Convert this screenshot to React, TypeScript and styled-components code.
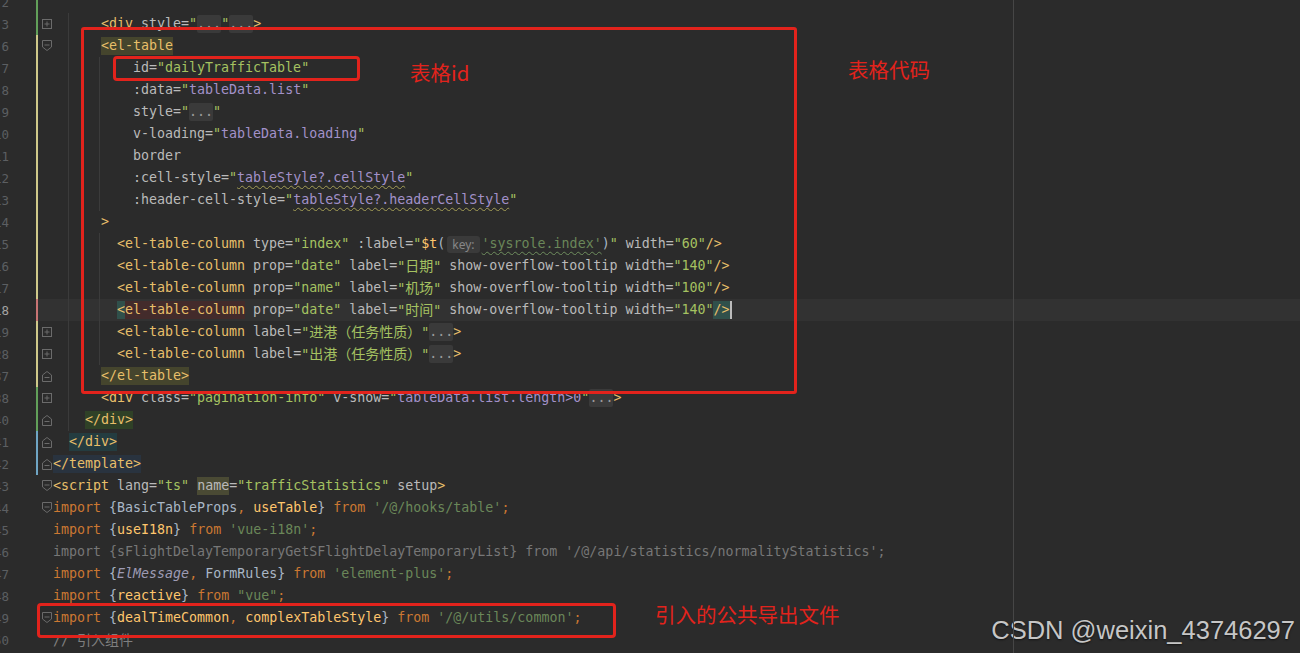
import React from "react";
import styled, { createGlobalStyle, css } from "styled-components";

type Kind =
  | "tag"
  | "attr"
  | "str"
  | "vue"
  | "fold"
  | "plain"
  | "kw"
  | "fn"
  | "js"
  | "dim"
  | "ital"
  | "cmt"
  | "hint"
  | "caret";

type Tok = { t: string; k: Kind; bg?: string; wavy?: string };
type FoldKind = "plus" | "open" | "close";
type Line = {
  n: number;
  indent: number;
  stripe?: string;
  fold?: FoldKind;
  guides?: number[];
  current?: boolean;
  toks: Tok[];
};

const GREEN = "#62a05a";
const YELLOW = "#cfc98a";
const PINK = "#c87474";
const BLUE = "#6fa5c4";

const OLIVE = "#45452d";
const TEAL = "#30504b";
const RED_BG = "#432b2b";

const colors: Record<Kind, string> = {
  tag: "#e8bf6a",
  attr: "#bababa",
  str: "#a5c261",
  vue: "#a291c9",
  fold: "#9a9a9a",
  plain: "#a9b7c6",
  kw: "#cc7832",
  fn: "#ffc66d",
  js: "#6a8759",
  dim: "#777777",
  ital: "#9e9bb4",
  cmt: "#7f7f7f",
  hint: "#8a8a8a",
  caret: "#bbbbbb",
};

const tk = (t: string, k: Kind, extra: Partial<Tok> = {}): Tok => ({ t, k, ...extra });

const lines: Line[] = [
  { n: 2, indent: 0, stripe: GREEN, toks: [] },
  {
    n: 3,
    indent: 3,
    stripe: GREEN,
    fold: "plus",
    guides: [15],
    toks: [tk("<div", "tag"), tk(" style=", "attr"), tk('"', "str"), tk("...", "fold"), tk('"', "str"), tk("...", "fold"), tk(">", "tag")],
  },
  { n: 6, indent: 3, stripe: YELLOW, fold: "open", guides: [15], toks: [tk("<el-table", "tag", { bg: OLIVE })] },
  { n: 7, indent: 5, stripe: YELLOW, guides: [15, 46], toks: [tk("id=", "attr"), tk('"dailyTrafficTable"', "str")] },
  {
    n: 8,
    indent: 5,
    stripe: YELLOW,
    guides: [15, 46],
    toks: [tk(":data=", "attr"), tk('"', "str"), tk("tableData.list", "vue"), tk('"', "str")],
  },
  {
    n: 9,
    indent: 5,
    stripe: YELLOW,
    guides: [15, 46],
    toks: [tk("style=", "attr"), tk('"', "str"), tk("...", "fold"), tk('"', "str")],
  },
  {
    n: 10,
    indent: 5,
    stripe: YELLOW,
    guides: [15, 46],
    toks: [tk("v-loading=", "attr"), tk('"', "str"), tk("tableData.loading", "vue"), tk('"', "str")],
  },
  { n: 11, indent: 5, stripe: YELLOW, guides: [15, 46], toks: [tk("border", "attr")] },
  {
    n: 12,
    indent: 5,
    stripe: YELLOW,
    guides: [15, 46],
    toks: [tk(":cell-style=", "attr"), tk('"', "str"), tk("tableStyle?.cellStyle", "vue", { wavy: "#a39d55" }), tk('"', "str")],
  },
  {
    n: 13,
    indent: 5,
    stripe: YELLOW,
    guides: [15, 46],
    toks: [
      tk(":header-cell-style=", "attr"),
      tk('"', "str"),
      tk("tableStyle?.headerCellStyle", "vue", { wavy: "#a39d55" }),
      tk('"', "str"),
    ],
  },
  { n: 14, indent: 3, stripe: YELLOW, guides: [15], toks: [tk(">", "tag")] },
  {
    n: 15,
    indent: 4,
    stripe: YELLOW,
    guides: [15, 46],
    toks: [
      tk("<el-table-column", "tag"),
      tk(" type=", "attr"),
      tk('"index"', "str"),
      tk(" :label=", "attr"),
      tk('"', "str"),
      tk("$t", "fn"),
      tk("(", "plain"),
      tk("key:", "hint"),
      tk("'sysrole.index'", "js", { wavy: "#6f8f5e" }),
      tk(")", "plain"),
      tk('"', "str"),
      tk(" width=", "attr"),
      tk('"60"', "str"),
      tk("/>", "tag"),
    ],
  },
  {
    n: 16,
    indent: 4,
    stripe: YELLOW,
    guides: [15, 46],
    toks: [
      tk("<el-table-column", "tag"),
      tk(" prop=", "attr"),
      tk('"date"', "str"),
      tk(" label=", "attr"),
      tk('"日期"', "str"),
      tk(" show-overflow-tooltip width=", "attr"),
      tk('"140"', "str"),
      tk("/>", "tag"),
    ],
  },
  {
    n: 17,
    indent: 4,
    stripe: YELLOW,
    guides: [15, 46],
    toks: [
      tk("<el-table-column", "tag"),
      tk(" prop=", "attr"),
      tk('"name"', "str"),
      tk(" label=", "attr"),
      tk('"机场"', "str"),
      tk(" show-overflow-tooltip width=", "attr"),
      tk('"100"', "str"),
      tk("/>", "tag"),
    ],
  },
  {
    n: 18,
    indent: 4,
    stripe: PINK,
    current: true,
    guides: [15, 46],
    toks: [
      tk("<", "tag", { bg: TEAL }),
      tk("el-table-column", "tag", { bg: RED_BG }),
      tk(" prop=", "attr"),
      tk('"date"', "str"),
      tk(" label=", "attr"),
      tk('"时间"', "str"),
      tk(" show-overflow-tooltip width=", "attr"),
      tk('"140"', "str"),
      tk("/>", "tag", { bg: TEAL }),
      tk("", "caret"),
    ],
  },
  {
    n: 19,
    indent: 4,
    stripe: YELLOW,
    fold: "plus",
    guides: [15, 46],
    toks: [tk("<el-table-column", "tag"), tk(" label=", "attr"), tk('"进港（任务性质）"', "str"), tk("...", "fold"), tk(">", "tag")],
  },
  {
    n: 28,
    indent: 4,
    stripe: YELLOW,
    fold: "plus",
    guides: [15, 46],
    toks: [tk("<el-table-column", "tag"), tk(" label=", "attr"), tk('"出港（任务性质）"', "str"), tk("...", "fold"), tk(">", "tag")],
  },
  { n: 37, indent: 3, stripe: YELLOW, fold: "close", guides: [15], toks: [tk("</el-table>", "tag", { bg: OLIVE })] },
  {
    n: 38,
    indent: 3,
    stripe: GREEN,
    fold: "plus",
    guides: [15],
    toks: [
      tk("<div", "tag"),
      tk(" class=", "attr"),
      tk('"pagination-info"', "str"),
      tk(" v-show=", "attr"),
      tk('"', "str"),
      tk("tableData.list.length>0", "vue"),
      tk('"', "str"),
      tk("...", "fold"),
      tk(">", "tag"),
    ],
  },
  { n: 40, indent: 2, stripe: GREEN, fold: "close", guides: [15], toks: [tk("</div>", "tag", { bg: "#2f4127" })] },
  { n: 41, indent: 1, stripe: BLUE, fold: "close", toks: [tk("</div>", "tag", { bg: "#243c40" })] },
  { n: 42, indent: 0, stripe: BLUE, fold: "close", toks: [tk("</template>", "tag", { bg: "#29333f" })] },
  {
    n: 43,
    indent: 0,
    fold: "open",
    toks: [
      tk("<script", "tag"),
      tk(" lang=", "attr"),
      tk('"ts"', "str"),
      tk(" ", "attr"),
      tk("name", "attr", { bg: "#4a4a34" }),
      tk("=", "attr"),
      tk('"trafficStatistics"', "str"),
      tk(" setup", "attr"),
      tk(">", "tag"),
    ],
  },
  {
    n: 44,
    indent: 0,
    fold: "open",
    toks: [
      tk("import", "kw"),
      tk(" {", "plain"),
      tk("BasicTableProps", "plain"),
      tk(", ", "kw"),
      tk("useTable", "fn"),
      tk("}", "plain"),
      tk(" from ", "kw"),
      tk("'/@/hooks/table'", "js"),
      tk(";", "kw"),
    ],
  },
  {
    n: 45,
    indent: 0,
    toks: [
      tk("import", "kw"),
      tk(" {", "plain"),
      tk("useI18n", "fn"),
      tk("}", "plain"),
      tk(" from ", "kw"),
      tk("'vue-i18n'", "js"),
      tk(";", "kw"),
    ],
  },
  {
    n: 46,
    indent: 0,
    toks: [tk("import {sFlightDelayTemporaryGetSFlightDelayTemporaryList} from '/@/api/statistics/normalityStatistics';", "dim")],
  },
  {
    n: 47,
    indent: 0,
    toks: [
      tk("import", "kw"),
      tk(" {", "plain"),
      tk("ElMessage", "ital"),
      tk(", ", "kw"),
      tk("FormRules", "plain"),
      tk("}", "plain"),
      tk(" from ", "kw"),
      tk("'element-plus'", "js"),
      tk(";", "kw"),
    ],
  },
  {
    n: 48,
    indent: 0,
    toks: [
      tk("import", "kw"),
      tk(" {", "plain"),
      tk("reactive", "fn"),
      tk("}", "plain"),
      tk(" from ", "kw"),
      tk('"vue"', "js"),
      tk(";", "kw"),
    ],
  },
  {
    n: 49,
    indent: 0,
    fold: "open",
    toks: [
      tk("import", "kw"),
      tk(" {", "plain"),
      tk("dealTimeCommon", "fn"),
      tk(", ", "kw"),
      tk("complexTableStyle", "fn"),
      tk("}", "plain"),
      tk(" from ", "kw"),
      tk("'/@/utils/common'", "js"),
      tk(";", "kw"),
    ],
  },
  { n: 50, indent: 0, toks: [tk("// 引入组件", "cmt")] },
];

const GlobalStyle = createGlobalStyle`
  html, body {
    margin: 0;
    padding: 0;
    background: #2b2b2b;
    overflow: hidden;
  }
`;

const Editor = styled.div`
  position: relative;
  width: 100vw;
  height: 100vh;
  overflow: hidden;
  background: #2b2b2b;
  font-family: "DejaVu Sans Mono", "Liberation Mono", monospace;
  font-size: 13.3px;

  &::after {
    content: "";
    position: absolute;
    top: 0;
    bottom: 0;
    left: 1013px;
    width: 1px;
    background: #464646;
  }
`;

const Lines = styled.div`
  display: flex;
  flex-direction: column;
  margin-top: -9px;
`;

const Row = styled.div`
  display: grid;
  grid-template-columns: 9px 27px 2px 15px 1fr;
  height: 22px;
  align-items: stretch;
`;

const LineNo = styled.div<{ $current?: boolean }>`
  display: flex;
  align-items: center;
  justify-content: flex-end;
  overflow: hidden;
  font-size: 12.5px;
  color: ${(p) => (p.$current ? "#a4a3a3" : "#5c5f62")};
`;

const Stripe = styled.div<{ $color?: string }>`
  background: ${(p) => p.$color ?? "transparent"};
`;

const FoldCell = styled.div<{ $current?: boolean }>`
  display: flex;
  align-items: center;
  justify-content: flex-end;
  padding-right: 1px;
  background: linear-gradient(90deg, transparent 9.5px, #3a3a3a 9.5px, #3a3a3a 10.5px, transparent 10.5px),
    ${(p) => (p.$current ? "#323232" : "transparent")};
`;

const Code = styled.div<{ $indent: number; $current?: boolean; $guides: string }>`
  display: flex;
  align-items: center;
  white-space: pre;
  overflow: hidden;
  padding-left: ${(p) => p.$indent * 16}px;
  background: ${(p) => p.$guides}${(p) => (p.$current ? "#323232" : "transparent")};
`;

const Token = styled.span<{ $k: Kind; $bg?: string; $wavy?: string }>`
  color: ${(p) => colors[p.$k]};
  line-height: 18px;
  ${(p) => p.$bg && css`background: ${p.$bg};`}
  ${(p) => p.$k === "ital" && css`font-style: italic;`}
  ${(p) =>
    p.$k === "fold" &&
    css`
      background: #3a3a3a;
      border-radius: 2px;
    `}
  ${(p) =>
    p.$wavy &&
    css`
      text-decoration: underline wavy ${p.$wavy};
      text-decoration-thickness: 1px;
      text-underline-offset: 3px;
    `}
`;

const Cjk = styled.span`
  font-family: "Noto Sans CJK SC", sans-serif;
  font-size: 14px;
`;

const Hint = styled.span`
  font-family: "Noto Sans", "DejaVu Sans", sans-serif;
  font-size: 12px;
  line-height: 17px;
  color: #878787;
  background: #3a3a3a;
  border-radius: 3px;
  padding: 0 5px;
  margin: 0 2px;
`;

const Caret = styled.span`
  display: inline-block;
  width: 0;
  height: 18px;
  border-left: 2px solid #bbbbbb;
`;

const Box = styled.div<{ $x: number; $y: number; $w: number; $h: number; $r?: number }>`
  position: absolute;
  left: ${(p) => p.$x}px;
  top: ${(p) => p.$y}px;
  width: ${(p) => p.$w}px;
  height: ${(p) => p.$h}px;
  box-sizing: border-box;
  border: 3px solid #e2231c;
  border-radius: ${(p) => p.$r ?? 3}px;
  pointer-events: none;
`;

const Note = styled.div<{ $x: number; $y: number }>`
  position: absolute;
  left: ${(p) => p.$x}px;
  top: ${(p) => p.$y}px;
  font-family: "Noto Sans CJK SC", "Noto Sans", sans-serif;
  font-size: 20.5px;
  line-height: 22px;
  color: #e2231c;
  white-space: nowrap;
`;

const Watermark = styled.div`
  position: absolute;
  right: 5px;
  bottom: 8px;
  font-family: "Liberation Sans", Arial, sans-serif;
  font-size: 25.5px;
  color: #c6c6c6;
  text-shadow: 0 1px 2px rgba(0, 0, 0, 0.6);
  white-space: nowrap;
`;

const FoldIcon = ({ kind }: { kind: FoldKind }) => {
  const stroke = "#6b6b6b";
  if (kind === "plus") {
    return (
      <svg width="10" height="10" viewBox="0 0 10 10">
        <rect x="0.5" y="0.5" width="9" height="9" fill="#2b2b2b" stroke={stroke} />
        <path d="M2.5 5H7.5M5 2.5V7.5" stroke={stroke} />
      </svg>
    );
  }
  const shape = kind === "open" ? "M0.5 0.5H9.5V7L5 10.5L0.5 7Z" : "M0.5 11.5H9.5V5L5 1.5L0.5 5Z";
  const dash = kind === "open" ? "M2.5 5H7.5" : "M2.5 7.5H7.5";
  return (
    <svg width="10" height="12" viewBox="0 0 10 12">
      <path d={shape} fill="#2b2b2b" stroke={stroke} strokeLinejoin="round" />
      <path d={dash} stroke={stroke} />
    </svg>
  );
};

const renderText = (text: string) =>
  text.split(/([\u3000-\u9fff\uff00-\uffef]+)/).map((part, i) =>
    /[\u3000-\u9fff\uff00-\uffef]/.test(part) ? <Cjk key={i}>{part}</Cjk> : part
  );

const guideBg = (guides: number[] = []) =>
  guides
    .map((g) => `linear-gradient(90deg, transparent ${g}px, #3b3b3b ${g}px, #3b3b3b ${g + 1}px, transparent ${g + 1}px), `)
    .join("");

const CodeLine = ({ line }: { line: Line }) => (
  <Row>
    <LineNo $current={line.current}>{line.n}</LineNo>
    <div />
    <Stripe $color={line.stripe} />
    <FoldCell $current={line.current}>{line.fold && <FoldIcon kind={line.fold} />}</FoldCell>
    <Code $indent={line.indent} $current={line.current} $guides={guideBg(line.guides)}>
      {line.toks.map((tok, i) => {
        if (tok.k === "hint") return <Hint key={i}>{tok.t}</Hint>;
        if (tok.k === "caret") return <Caret key={i} />;
        return (
          <Token key={i} $k={tok.k} $bg={tok.bg} $wavy={tok.wavy}>
            {renderText(tok.t)}
          </Token>
        );
      })}
    </Code>
  </Row>
);

export default function App() {
  return (
    <>
      <GlobalStyle />
      <Editor>
        <Lines>
          {lines.map((line) => (
            <CodeLine key={line.n} line={line} />
          ))}
        </Lines>

        <Box $x={81} $y={27} $w={716} $h={367} />
        <Box $x={113} $y={56} $w={247} $h={25} $r={4} />
        <Box $x={37} $y={603} $w={579} $h={35} $r={4} />

        <Note $x={410} $y={61}>表格id</Note>
        <Note $x={848} $y={58}>表格代码</Note>
        <Note $x={655} $y={603}>引入的公共导出文件</Note>

        <Watermark>CSDN @weixin_43746297</Watermark>
      </Editor>
    </>
  );
}
